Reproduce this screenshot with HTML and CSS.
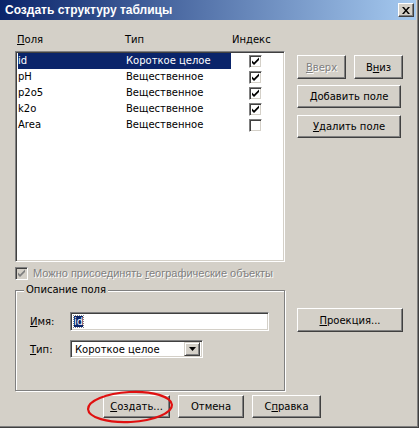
FILE: index.html
```html
<!DOCTYPE html>
<html lang="ru">
<head>
    <meta charset="UTF-8">
    <link rel="stylesheet" href="styles.css">
    <title>Создать структуру таблицы</title>
</head>
<body>

    <div class="window">
        <div class="titlebar">
            <span class="title">Создать структуру таблицы</span>
            <button class="close">
                <svg width="8" height="7" viewBox="0 0 8 7"><path d="M0 0h2l2 2.5L6 0h2L5 3.5 8 7H6L4 4.5 2 7H0l3-3.5z" fill="#000"/></svg>
            </button>
        </div>

        <div class="body">
            <div class="main">
                <div class="left">
                    <div class="cols">
                        <span class="c-name"><u>П</u>оля</span>
                        <span class="c-type">Тип</span>
                        <span class="c-head">Индекс</span>
                    </div>

                    <div class="list">
                        <div class="row selected">
                            <span class="c-name">id</span>
                            <span class="c-type">Короткое целое</span>
                            <span class="c-idx"><span class="check"><svg width="9" height="9" viewBox="0 0 9 9"><path d="M1 3.5l2 2 5-5v2.5L3 8 1 6z" fill="#000"/></svg></span></span>
                        </div>
                        <div class="row">
                            <span class="c-name">pH</span>
                            <span class="c-type">Вещественное</span>
                            <span class="c-idx"><span class="check"><svg width="9" height="9" viewBox="0 0 9 9"><path d="M1 3.5l2 2 5-5v2.5L3 8 1 6z" fill="#000"/></svg></span></span>
                        </div>
                        <div class="row">
                            <span class="c-name">p2o5</span>
                            <span class="c-type">Вещественное</span>
                            <span class="c-idx"><span class="check"><svg width="9" height="9" viewBox="0 0 9 9"><path d="M1 3.5l2 2 5-5v2.5L3 8 1 6z" fill="#000"/></svg></span></span>
                        </div>
                        <div class="row">
                            <span class="c-name">k2o</span>
                            <span class="c-type">Вещественное</span>
                            <span class="c-idx"><span class="check"><svg width="9" height="9" viewBox="0 0 9 9"><path d="M1 3.5l2 2 5-5v2.5L3 8 1 6z" fill="#000"/></svg></span></span>
                        </div>
                        <div class="row">
                            <span class="c-name">Area</span>
                            <span class="c-type">Вещественное</span>
                            <span class="c-idx"><span class="check"></span></span>
                        </div>
                    </div>

                    <div class="geo">
                        <span class="check disabled"><svg width="9" height="9" viewBox="0 0 9 9"><path d="M1 3.5l2 2 5-5v2.5L3 8 1 6z" fill="#808080"/></svg></span>
                        <span class="geo-text">Можно присоединять <u>г</u>еографические объекты</span>
                    </div>

                    <div class="group">
                        <span class="legend">Описание поля</span>
                        <div class="field name-field">
                            <span class="label"><u>И</u>мя:</span>
                            <span class="input"><span class="sel-text">id</span></span>
                        </div>
                        <div class="field">
                            <span class="label"><u>Т</u>ип:</span>
                            <span class="combo">
                                <span class="combo-text">Короткое целое</span>
                                <span class="combo-btn"><svg width="7" height="4" viewBox="0 0 7 4"><path d="M0 0h7L3.5 4z" fill="#000"/></svg></span>
                            </span>
                        </div>
                    </div>
                </div>

                <div class="right">
                    <div class="btn-pair">
                        <button class="btn small disabled-btn"><u>В</u>верх</button>
                        <button class="btn small">В<u>н</u>из</button>
                    </div>
                    <button class="btn wide"><u>Д</u>обавить поле</button>
                    <button class="btn wide"><u>У</u>далить поле</button>
                    <button class="btn wide projection"><u>П</u>роекция...</button>
                </div>
            </div>

            <div class="actions">
                <button class="btn create"><u>С</u>оздать...</button>
                <button class="btn cancel">Отмена</button>
                <button class="btn help">С<u>п</u>равка</button>
            </div>
        </div>

        <svg class="mark" width="92" height="38" viewBox="0 0 92 38">
            <ellipse cx="45" cy="18" rx="42" ry="15" fill="none" stroke="#e01010" stroke-width="2.2" transform="rotate(-3 45 18)"/>
        </svg>
    </div>

</body>
</html>
```

FILE: styles.css
```css
body {
    margin: 0;
    padding: 0;
    background-color: #d4d0c8;
    font-family: 'DejaVu Sans', Verdana, sans-serif;
    font-size: 10px;
    color: #000;
}

u {
    text-decoration: underline;
    text-underline-offset: 1px;
}

.window {
    position: relative;
    width: 419px;
    height: 428px;
    box-sizing: border-box;
    background-color: #d4d0c8;
    border-right: 1px solid #404040;
    border-bottom: 1px solid #404040;
    box-shadow: inset -1px -1px 0 #808080;
}

.titlebar {
    height: 20px;
    width: 416px;
    display: flex;
    align-items: center;
    justify-content: space-between;
    box-sizing: border-box;
    padding: 0 2px 0 5px;
    background: linear-gradient(to right, #0a246a, #a6caf0);
}

.title {
    color: #fff;
    font-family: 'Liberation Sans', Arial, sans-serif;
    font-weight: bold;
    font-size: 12px;
}

.close {
    width: 16px;
    height: 14px;
    padding: 0;
    display: flex;
    align-items: center;
    justify-content: center;
    background-color: #d4d0c8;
    border: 1px solid;
    border-color: #fff #404040 #404040 #fff;
    box-shadow: inset -1px -1px 0 #808080;
}

.body {
    padding: 0 0 0 15px;
}

.main {
    display: flex;
    gap: 12px;
    margin-top: 13px;
}

.left {
    width: 270px;
}

.cols {
    display: flex;
    height: 18px;
    line-height: 14px;
    padding-left: 2px;
}

.c-name {
    width: 108px;
}

.c-type {
    width: 105px;
}

.c-head {
    padding-left: 2px;
}

.list {
    height: 211px;
    box-sizing: border-box;
    background-color: #fff;
    border: 1px solid;
    border-color: #808080 #fff #fff #808080;
    box-shadow: inset 1px 1px 0 #404040, inset -1px -1px 0 #d4d0c8;
    padding: 1px 2px 0 2px;
}

.row {
    display: flex;
    height: 16px;
    line-height: 16px;
}

.row.selected .c-name,
.row.selected .c-type {
    background-color: #0a246a;
    color: #fff;
}

.c-idx {
    flex: 1;
    display: flex;
    align-items: center;
    justify-content: center;
    padding-right: 3px;
}

.check {
    width: 13px;
    height: 13px;
    box-sizing: border-box;
    display: inline-flex;
    align-items: center;
    justify-content: center;
    background-color: #fff;
    border: 1px solid;
    border-color: #808080 #fff #fff #808080;
    box-shadow: inset 1px 1px 0 #404040, inset -1px -1px 0 #d4d0c8;
}

.check.disabled {
    background-color: #d4d0c8;
}

.geo {
    display: flex;
    align-items: center;
    gap: 5px;
    height: 14px;
    margin-top: 4px;
}

.geo-text {
    font-family: 'Liberation Sans', Arial, sans-serif;
    font-size: 11px;
    color: #808080;
    text-shadow: 1px 1px 0 #fff;
}

.group {
    height: 101px;
    box-sizing: border-box;
    margin-top: 10px;
    border: 1px solid #808080;
    box-shadow: inset 1px 1px 0 #fff, 1px 1px 0 #fff;
    padding-left: 14px;
}

.legend {
    display: inline-block;
    margin: -8px 0 0 -6px;
    padding: 0 2px;
    height: 14px;
    line-height: 14px;
    background-color: #d4d0c8;
    vertical-align: top;
}

.field {
    display: flex;
    align-items: center;
    margin-top: 9px;
}

.name-field {
    margin-top: 10px;
}

.label {
    width: 40px;
}

.input {
    width: 199px;
    height: 19px;
    box-sizing: border-box;
    background-color: #fff;
    border: 1px solid;
    border-color: #808080 #fff #fff #808080;
    box-shadow: inset 1px 1px 0 #404040, inset -1px -1px 0 #d4d0c8;
    padding: 2px 0 0 3px;
    line-height: 13px;
}

.sel-text {
    background-color: #0a246a;
    color: #fff;
    outline: 1px dotted #808080;
}

.combo {
    width: 133px;
    height: 18px;
    box-sizing: border-box;
    display: flex;
    align-items: center;
    justify-content: space-between;
    background-color: #fff;
    border: 1px solid;
    border-color: #808080 #fff #fff #808080;
    box-shadow: inset 1px 1px 0 #404040, inset -1px -1px 0 #d4d0c8;
    padding: 2px 2px 2px 4px;
}

.combo-btn {
    width: 16px;
    height: 14px;
    box-sizing: border-box;
    display: flex;
    align-items: center;
    justify-content: center;
    background-color: #d4d0c8;
    border: 1px solid;
    border-color: #d4d0c8 #404040 #404040 #d4d0c8;
    box-shadow: inset 1px 1px 0 #fff, inset -1px -1px 0 #808080;
}

.right {
    width: 106px;
    display: flex;
    flex-direction: column;
}

.btn {
    font-family: 'DejaVu Sans', Verdana, sans-serif;
    font-size: 10px;
    color: #000;
    height: 23px;
    padding: 0;
    background-color: #d4d0c8;
    border: 1px solid;
    border-color: #fff #404040 #404040 #fff;
    box-shadow: inset -1px -1px 0 #808080;
}

.btn-pair {
    display: flex;
    justify-content: space-between;
    margin-top: 22px;
}

.small {
    width: 49px;
    height: 24px;
}

.disabled-btn {
    color: #808080;
    text-shadow: 1px 1px 0 #fff;
}

.wide {
    width: 104px;
    margin-top: 6px;
}

.wide + .wide {
    margin-top: 7px;
}

.wide.projection {
    width: 106px;
    height: 24px;
    margin-top: 170px;
}

.actions {
    display: flex;
    gap: 8px;
    margin: 4px 0 0 88px;
}

.create {
    width: 67px;
}

.cancel {
    width: 66px;
}

.help {
    width: 69px;
}

.mark {
    position: absolute;
    left: 85px;
    top: 389px;
}
```
